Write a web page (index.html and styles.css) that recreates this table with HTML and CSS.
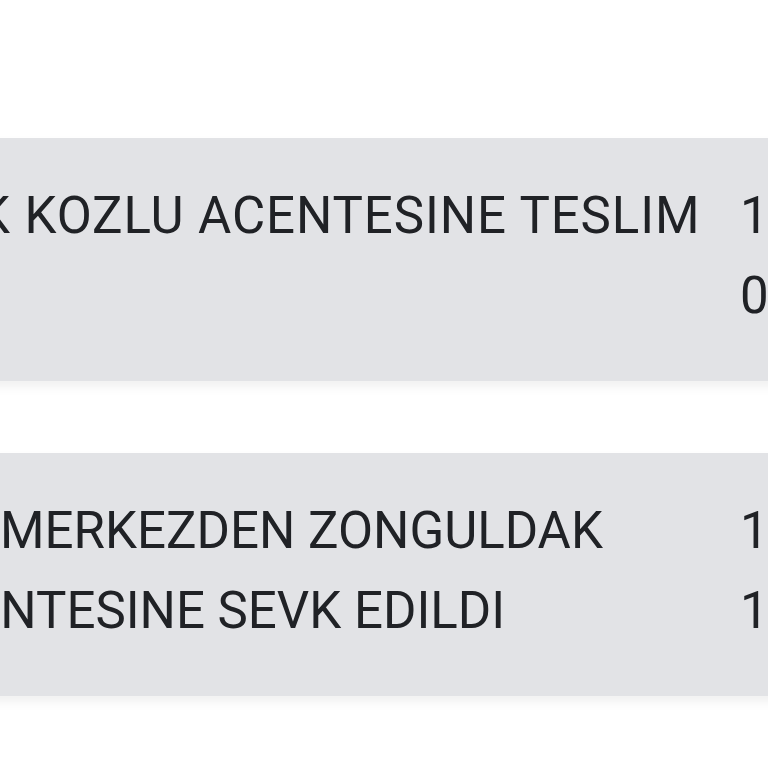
FILE: index.html
```html
<!DOCTYPE html>
<html lang="tr">
<head>
<meta charset="utf-8">
<link rel="stylesheet" href="styles.css">
</head>
<body>
<div class="list">
  <div class="card">
    <div class="desc desc-wide">ZONGULDAK KOZLU ACENTESINE TESLIM</div>
    <div class="date">13.05.2023<br>09:45</div>
  </div>
  <div class="card">
    <div class="desc">TRANSFER MERKEZDEN ZONGULDAK KOZLU ACENTESINE SEVK EDILDI</div>
    <div class="date">12.05.2023<br>18:20</div>
  </div>
</div>
</body>
</html>
```

FILE: styles.css
```css
html, body {
  margin: 0;
  padding: 0;
  background: #ffffff;
  overflow: hidden;
}
body {
  width: 768px;
  height: 768px;
  font-family: Roboto, "Noto Sans", sans-serif;
  font-size: 51px;
  line-height: 80px;
  color: #202226;
}
.list {
  margin-left: -295px;
  width: 1400px;
  padding-top: 138px;
}
.card {
  display: flex;
  background: #e2e3e6;
  padding: 38px 0 45px 32px;
  margin-bottom: 72px;
  box-shadow: 0 6px 10px rgba(0, 0, 0, 0.06);
}
.desc {
  flex: 0 0 981px;
}
.desc-wide {
  margin-left: -29px;
  flex-basis: 1010px;
  letter-spacing: 0.9px;
}
.date {
  margin-left: 22px;
  white-space: nowrap;
}
```
